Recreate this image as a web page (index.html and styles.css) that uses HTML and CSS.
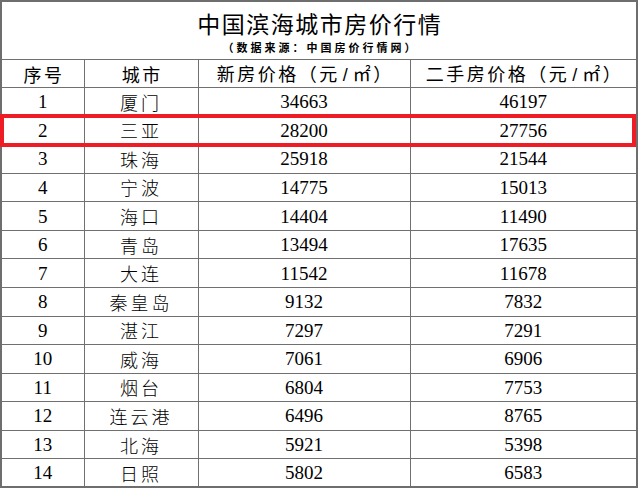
FILE: index.html
```html
<!DOCTYPE html>
<html lang="zh">
<head>
<meta charset="utf-8">
<title>中国滨海城市房价行情</title>
<link rel="stylesheet" href="styles.css">
</head>
<body>
<div class="sheet">
  <table class="price-table">
    <colgroup>
      <col class="c-no"><col class="c-city"><col class="c-new"><col class="c-old">
    </colgroup>
    <thead>
      <tr class="title-row">
        <th colspan="4">
          <div class="title">中国滨海城市房价行情</div>
          <div class="subtitle">（数据来源：中国房价行情网）</div>
        </th>
      </tr>
      <tr class="head-row">
        <th>序号</th><th>城市</th><th>新房价格（元<span class="slash">/</span>㎡）</th><th>二手房价格（元<span class="slash">/</span>㎡）</th>
      </tr>
    </thead>
    <tbody>
      <tr><td class="num">1</td><td class="city">厦门</td><td class="num">34663</td><td class="num">46197</td></tr>
      <tr><td class="num">2</td><td class="city">三亚</td><td class="num">28200</td><td class="num">27756</td></tr>
      <tr><td class="num">3</td><td class="city">珠海</td><td class="num">25918</td><td class="num">21544</td></tr>
      <tr><td class="num">4</td><td class="city">宁波</td><td class="num">14775</td><td class="num">15013</td></tr>
      <tr><td class="num">5</td><td class="city">海口</td><td class="num">14404</td><td class="num">11490</td></tr>
      <tr><td class="num">6</td><td class="city">青岛</td><td class="num">13494</td><td class="num">17635</td></tr>
      <tr><td class="num">7</td><td class="city">大连</td><td class="num">11542</td><td class="num">11678</td></tr>
      <tr><td class="num">8</td><td class="city">秦皇岛</td><td class="num">9132</td><td class="num">7832</td></tr>
      <tr><td class="num">9</td><td class="city">湛江</td><td class="num">7297</td><td class="num">7291</td></tr>
      <tr><td class="num">10</td><td class="city">威海</td><td class="num">7061</td><td class="num">6906</td></tr>
      <tr><td class="num">11</td><td class="city">烟台</td><td class="num">6804</td><td class="num">7753</td></tr>
      <tr><td class="num">12</td><td class="city">连云港</td><td class="num">6496</td><td class="num">8765</td></tr>
      <tr><td class="num">13</td><td class="city">北海</td><td class="num">5921</td><td class="num">5398</td></tr>
      <tr><td class="num">14</td><td class="city">日照</td><td class="num">5802</td><td class="num">6583</td></tr>
    </tbody>
  </table>
  <div class="highlight"></div>
</div>
</body>
</html>
```

FILE: styles.css
```css
html, body {
  margin: 0;
  padding: 0;
  background: #fff;
}

.sheet {
  position: relative;
  width: 636px;
}

.price-table {
  border-collapse: collapse;
  table-layout: fixed;
  width: 636px;
  border: 2px solid #6e6e6e;
  color: #000;
  font-family: "Noto Sans CJK SC", "Liberation Serif", serif;
}

.c-no { width: 83px; }
.c-city { width: 114px; }
.c-new { width: 212px; }
.c-old { width: 227px; }

.price-table th,
.price-table td {
  border: 1px solid #707070;
  padding: 0;
  text-align: center;
  vertical-align: middle;
  line-height: 1;
}

.title-row th {
  height: 57px;
  font-weight: normal;
}

.title {
  font-size: 23px;
  letter-spacing: 1.5px;
  padding-left: 1.5px;
  line-height: 26px;
  margin-top: 2px;
}

.subtitle {
  font-size: 11px;
  font-weight: bold;
  letter-spacing: 3px;
  padding-left: 3px;
  line-height: 14px;
  margin-top: 4px;
}

.head-row th {
  height: 27px;
  font-size: 18px;
  font-weight: normal;
  letter-spacing: 2.5px;
  padding-left: 2.5px;
}

.slash {
  font-family: "Liberation Sans", sans-serif;
  letter-spacing: 5px;
  padding-left: 3px;
}

tbody tr {
  height: 28.57px;
}

.num {
  font-family: "Liberation Serif", serif;
  font-size: 19px;
  padding-top: 2px;
}

.city {
  font-size: 18px;
  letter-spacing: 3px;
  padding-left: 3px;
  font-weight: 300;
}

.highlight {
  position: absolute;
  left: 0;
  top: 114px;
  width: 636px;
  height: 33px;
  box-sizing: border-box;
  border: 4px solid #ee1c25;
  pointer-events: none;
}
```
